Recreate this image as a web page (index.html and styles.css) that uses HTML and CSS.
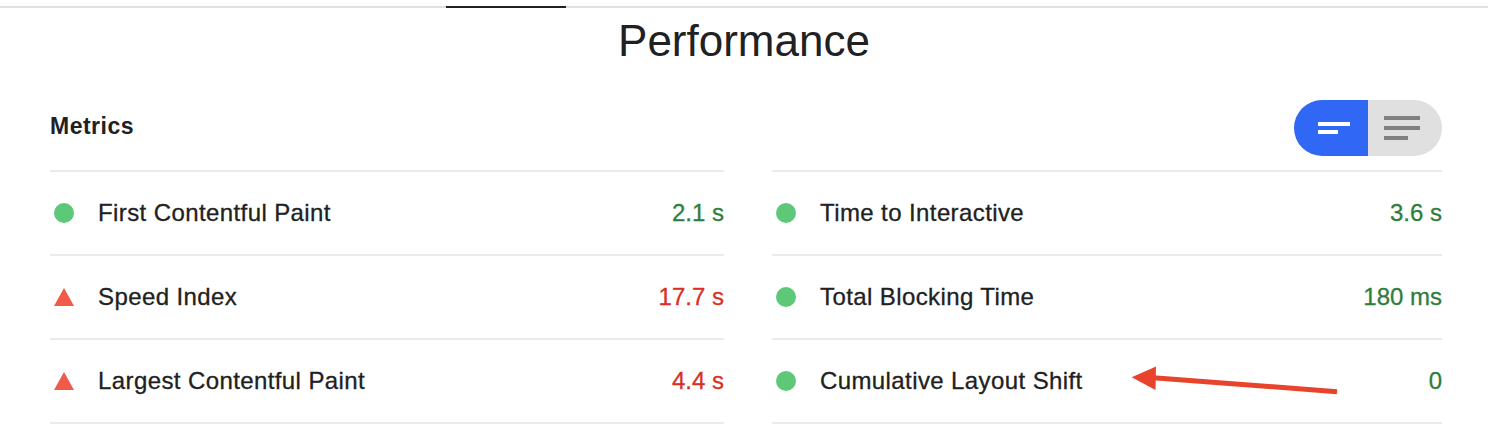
FILE: index.html
```html
<!DOCTYPE html>
<html>
<head>
    <meta charset="UTF-8">
    <title>Performance</title>
    <link rel="stylesheet" href="styles.css">
</head>
<body>

<div class="tabbar">
    <div class="tab-active"></div>
</div>

<h1 class="category-title">Performance</h1>

<section class="metrics">
    <div class="metrics-header">
        <h2 class="metrics-title">Metrics</h2>
        <div class="toggle">
            <span class="toggle-btn toggle-on">
                <svg width="74" height="56" viewBox="0 0 74 56">
                    <rect x="24" y="22" width="32" height="4" fill="#fff"/>
                    <rect x="24" y="30" width="20" height="4" fill="#fff"/>
                </svg>
            </span>
            <span class="toggle-btn">
                <svg width="74" height="56" viewBox="0 0 74 56">
                    <rect x="16" y="16" width="36" height="4" fill="#808080"/>
                    <rect x="16" y="26" width="36" height="4" fill="#808080"/>
                    <rect x="16" y="36" width="24" height="4" fill="#808080"/>
                </svg>
            </span>
        </div>
    </div>

    <div class="metrics-grid">
        <div class="metric-col">
            <div class="metric">
                <span class="icon pass"></span>
                <span class="label">First Contentful Paint</span>
                <span class="value good">2.1 s</span>
            </div>
            <div class="metric">
                <svg class="icon" width="20" height="20" viewBox="0 0 20 20"><polygon points="10,1 20,19 0,19" fill="#ef5a4a"/></svg>
                <span class="label">Speed Index</span>
                <span class="value bad">17.7 s</span>
            </div>
            <div class="metric">
                <svg class="icon" width="20" height="20" viewBox="0 0 20 20"><polygon points="10,1 20,19 0,19" fill="#ef5a4a"/></svg>
                <span class="label">Largest Contentful Paint</span>
                <span class="value bad">4.4 s</span>
            </div>
        </div>
        <div class="metric-col">
            <div class="metric">
                <span class="icon pass"></span>
                <span class="label">Time to Interactive</span>
                <span class="value good">3.6 s</span>
            </div>
            <div class="metric">
                <span class="icon pass"></span>
                <span class="label">Total Blocking Time</span>
                <span class="value good">180 ms</span>
            </div>
            <div class="metric">
                <span class="icon pass"></span>
                <span class="label">Cumulative Layout Shift</span>
                <span class="value good">0</span>
            </div>
        </div>
    </div>
</section>

<!-- annotation drawn over the screenshot -->
<svg class="arrow" width="230" height="50" viewBox="0 0 230 50">
    <line x1="30" y1="22.5" x2="217" y2="36.7" stroke="#e8432b" stroke-width="5"/>
    <polygon points="11.7,22.3 36,11.5 35.5,35" fill="#e8432b"/>
</svg>

</body>
</html>
```

FILE: styles.css
```css
html, body {
    margin: 0;
    padding: 0;
    background: #ffffff;
    color: #212121;
    font-family: "Liberation Sans", Arial, sans-serif;
}

.tabbar {
    margin-top: 6px;
    height: 2px;
    background: #e0e0e0;
}

.tab-active {
    margin-left: 446px;
    width: 120px;
    height: 2px;
    background: #212121;
}

.category-title {
    margin: 8px 0 0 0;
    font-size: 44px;
    font-weight: normal;
    line-height: 50px;
    text-align: center;
}

.metrics {
    padding: 0 46px 0 50px;
}

.metrics-header {
    display: flex;
    align-items: center;
    justify-content: space-between;
    height: 56px;
    margin: 34px 0 14px 0;
}

.metrics-title {
    margin: 0 0 4px 0;
    font-size: 23px;
    font-weight: bold;
    line-height: 26px;
    letter-spacing: 0.5px;
}

.toggle {
    display: flex;
    height: 56px;
    border-radius: 28px;
    overflow: hidden;
}

.toggle-btn {
    display: block;
    width: 74px;
    height: 56px;
    background: #e0e0e0;
}

.toggle-btn svg {
    display: block;
}

.toggle-on {
    background: #3167f5;
}

.metrics-grid {
    display: grid;
    grid-template-columns: 674fr 670fr;
    column-gap: 48px;
}

.metric-col {
    border-top: 2px solid #ebebeb;
}

.metric {
    display: flex;
    align-items: center;
    height: 82px;
    padding-left: 4px;
    border-bottom: 2px solid #ebebeb;
    font-size: 24px;
    -webkit-text-stroke: 0.3px currentColor;
}

.icon {
    display: block;
    flex: none;
    width: 20px;
    height: 20px;
    margin-right: 24px;
}

.icon.pass {
    border-radius: 50%;
    background: #5cc878;
}

.label {
    flex: 1;
    letter-spacing: 0.4px;
}

.value.good {
    color: #2e7d3e;
}

.value.bad {
    color: #d93025;
}

.arrow {
    position: absolute;
    left: 1120px;
    top: 355px;
}
```
